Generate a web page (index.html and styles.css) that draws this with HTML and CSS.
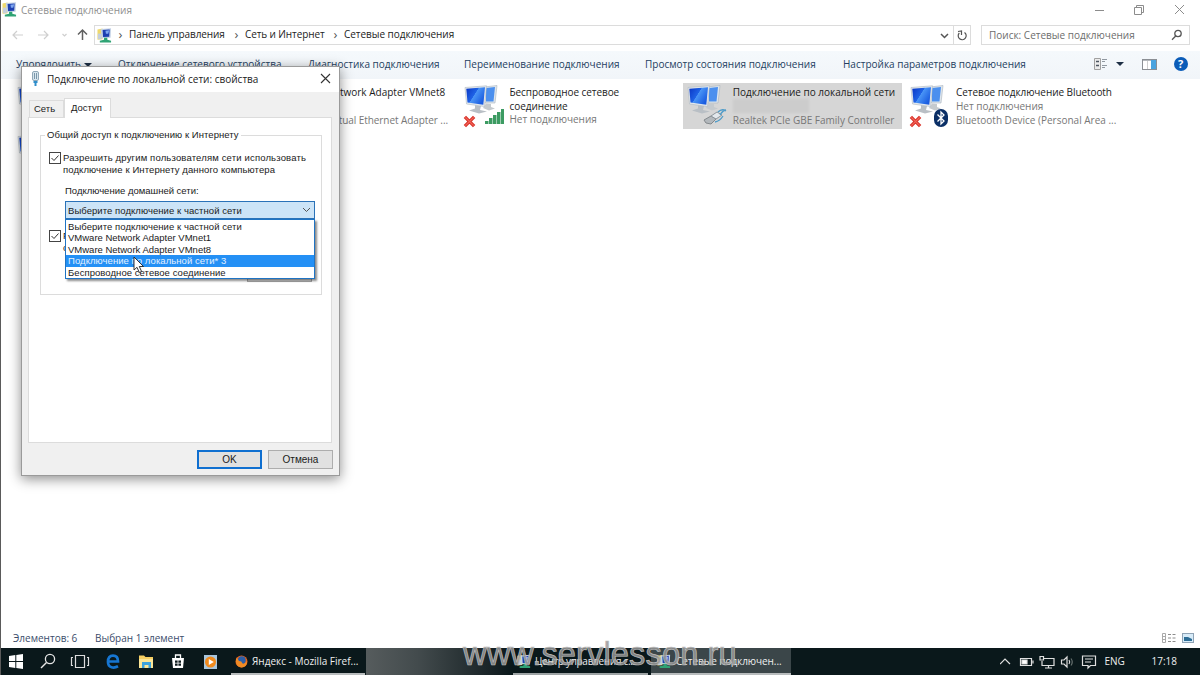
FILE: index.html
```
<!DOCTYPE html>
<html lang="ru">
<head>
    <meta charset="UTF-8">
    <title>Сетевые подключения</title>
    <link rel="stylesheet" href="styles.css">
</head>
<body>
    <!-- Shared icons -->
    <svg class="defs" width="0" height="0">
        <defs>
            <linearGradient id="screen" x1="0" y1="0" x2="1" y2="0.6">
                <stop offset="0" stop-color="#0a35c4"/>
                <stop offset="0.5" stop-color="#1f63e6"/>
                <stop offset="0.52" stop-color="#4a95f6"/>
                <stop offset="1" stop-color="#1a5ce0"/>
            </linearGradient>
            <symbol id="monitors" viewBox="0 0 34 30">
                <path d="M20 2 L33 0.5 L31 18 L21 18 Z" fill="#dfe6ec" stroke="#a9b4be" stroke-width="0.6"/>
                <path d="M22 3 L31 2 L29.5 16.5 L22 16.5 Z" fill="#4b8fee"/>
                <path d="M11 20 L17 21 L16 25 L23 26.500 L15 28.500 L5 25.500 L11 23.500 Z" fill="#b9bfc5"/>
                <path d="M22 18.500 L27 19 L27 22 L31 23.500 L25 25.500 L19 23 Z" fill="#c5cace"/>
                <path d="M1 2.5 L22.500 0.8 L20.500 21.5 L2.500 19 Z" fill="#e4e9ee" stroke="#aeb8c1" stroke-width="0.6"/>
                <path d="M2.300 3.800 L21 2.200 L19.3 19.8 L3.500 17.500 Z" fill="url(#screen)"/>
            </symbol>
            <symbol id="cross" viewBox="0 0 14 14">
                <path d="M2 2 L12 12 M12 2 L2 12" stroke="#d9342b" stroke-width="3.6"/>
                <path d="M2.5 2.5 L11.5 11.5 M11.5 2.5 L2.5 11.5" stroke="#f2655a" stroke-width="1.2"/>
            </symbol>
            <symbol id="network" viewBox="0 0 16 16">
                <path d="M0.500 1.500 L6 0.500 V12 L0.500 12.500 Z" fill="#efd96c"/>
                <path d="M1 6 H5 V12 H1 Z" fill="#c5cfdb"/>
                <path d="M4 1 L15 0.300 L14.500 10.500 L5 11 Z" fill="#c4d2e6"/>
                <path d="M6 2.200 L13.500 1.500 L13 9.400 L6.500 9.600 Z" fill="#1d3fb0"/>
                <path d="M9 3 L13 2.500 L12 6 L9.500 6 Z" fill="#7ea6f0"/>
                <path d="M7.500 10.500 H11 V12.500 L15 13.500 V15.500 H3 V13.500 L7.500 12.500 Z" fill="#2fa374"/>
            </symbol>
        </defs>
    </svg>

    <div class="screen">
        <!-- Title bar -->
        <header class="titlebar">
            <svg width="15" height="15"><use href="#network"/></svg>
            <span class="title">Сетевые подключения</span>
            <svg class="win-btns" width="100" height="14" fill="none" stroke="#8c8c8c">
                <path d="M3 7.5 H12"/>
                <path d="M42.5 4.5 H49.5 V11.5 H42.5 Z M44.5 4.5 V2.5 H51.5 V9.5 H49.5"/>
                <path d="M83 2 L92 11 M92 2 L83 11"/>
            </svg>
        </header>

        <!-- Navigation and address -->
        <nav class="navbar">
            <svg class="arrows" width="94" height="20" fill="none" stroke="#cfcfcf" stroke-width="1.2">
                <path d="M23 10 H13 M17 6 L13 10 L17 14"/>
                <path d="M38 10 H48 M44 6 L48 10 L44 14"/>
                <path d="M62.500 9 L64.500 11 L66.500 9"/>
                <path d="M82.500 15 V5 M78 9.500 L82.500 5 L87 9.500" stroke="#606060" stroke-width="1.5"/>
            </svg>
            <div class="address">
                <svg width="15" height="15"><use href="#network"/></svg>
                <span class="sep">›</span>
                <span class="crumb crumb-1">Панель управления</span>
                <span class="sep">›</span>
                <span class="crumb crumb-2">Сеть и Интернет</span>
                <span class="sep">›</span>
                <span class="crumb crumb-3">Сетевые подключения</span>
                <svg class="address-end" width="34" height="18" fill="none" stroke="#555">
                    <path d="M5 8 L8.500 11.500 L12 8" stroke-width="1.5"/>
                    <path d="M17.500 0 V18" stroke="#dcdcdc"/>
                    <path d="M23.300 7 A4 4 0 1 0 28.500 6.500 M22 5.500 L25.500 5 V9" stroke-width="1.2"/>
                </svg>
            </div>
            <div class="search">
                <span>Поиск: Сетевые подключения</span>
                <svg width="12" height="12" fill="none" stroke="#555" stroke-width="1.3">
                    <circle cx="7" cy="4.500" r="3.200"/>
                    <path d="M4.700 7 L1 10.700"/>
                </svg>
            </div>
        </nav>

        <!-- Command bar -->
        <div class="commands">
            <span class="cmd">Упорядочить <i class="caret"></i></span>
            <span class="cmd">Отключение сетевого устройства</span>
            <span class="cmd">Диагностика подключения</span>
            <span class="cmd">Переименование подключения</span>
            <span class="cmd">Просмотр состояния подключения</span>
            <span class="cmd">Настройка параметров подключения</span>
            <svg width="98" height="16" fill="none">
                <path d="M1.500 2.500 H7.500 V13.500 H1.500 Z" stroke="#a0a0a0" fill="#ececec"/>
                <path d="M3 5.500 H6 M3 9.500 H6" stroke="#4c5560" stroke-width="1.500"/>
                <path d="M9 3.500 H14 M9 5.500 H12 M9 9.500 H14 M9 11.500 H12" stroke="#9098a0"/>
                <path d="M23 6 H31 L27 10 Z" fill="#1e2f45"/>
                <rect x="49.500" y="3.500" width="14" height="10" fill="#fff" stroke="#8b8f94"/>
                <path d="M50 4.500 H63" stroke="#b4b8bc"/>
                <rect x="58" y="4" width="5" height="9" fill="#4aa3df"/>
                <path d="M54.500 5 V13" stroke="#cfcfcf"/>
                <circle cx="88" cy="8" r="7" fill="#0b5cb8"/>
                <text x="85" y="12" class="help">?</text>
            </svg>
        </div>

        <!-- Connections -->
        <main class="connections">
            <div class="conn">
                <div class="conn-icon"><svg width="34" height="30"><use href="#monitors"/></svg></div>
            </div>
            <div class="conn">
                <div class="conn-icon"><svg width="34" height="30"><use href="#monitors"/></svg></div>
                <div class="conn-text">
                    <b>VMware Network Adapter VMnet8</b>
                    <span>Включено</span>
                    <span class="tight">VMware Virtual Ethernet Adapter ...</span>
                </div>
            </div>
            <div class="conn">
                <div class="conn-icon">
                    <svg width="34" height="30"><use href="#monitors"/></svg>
                    <svg class="off" width="13" height="13"><use href="#cross"/></svg>
                    <svg class="badge" width="20" height="17" fill="#3c9b62">
                        <path d="M0 13 H3.500 V16 H0 Z M4 10 H7.500 V16 H4 Z M8 7 H11.500 V16 H8 Z M12 4 H15.500 V16 H12 Z M16 1 H19 V16 H16 Z"/>
                    </svg>
                </div>
                <div class="conn-text wifi">
                    <b class="tight">Беспроводное сетевое<br>соединение</b>
                    <span>Нет подключения</span>
                </div>
            </div>
            <div class="conn selected">
                <div class="conn-icon">
                    <svg width="34" height="30"><use href="#monitors"/></svg>
                    <svg class="badge plug" width="24" height="17" fill="none">
                        <path d="M1 12 L8 8 L13 11 L8 16 L3 15 Z" fill="#b3b8bc" stroke="#84898d"/>
                        <path d="M8 8 L14 4 L19 7 L13 11 Z" fill="#e3e8ec" stroke="#8f979d"/>
                        <path d="M15 4 Q19 0 23 3 M17 7 Q20 2 23 2 M12 14 Q17 13 20 8" stroke="#4f9cc9" stroke-width="1.300"/>
                    </svg>
                </div>
                <div class="conn-text">
                    <b>Подключение по локальной сети</b>
                    <span class="smudge"></span>
                    <span>Realtek PCIe GBE Family Controller</span>
                </div>
            </div>
            <div class="conn">
                <div class="conn-icon">
                    <svg width="34" height="30"><use href="#monitors"/></svg>
                    <svg class="off" width="13" height="13"><use href="#cross"/></svg>
                    <svg class="badge bt" width="14" height="18">
                        <rect width="14" height="18" rx="7" fill="#0b2f66"/>
                        <path d="M3.500 5.500 L10 12 L7 15 V3 L10 6 L3.500 12.500" fill="none" stroke="#fff" stroke-width="1.300"/>
                    </svg>
                </div>
                <div class="conn-text">
                    <b class="tight">Сетевое подключение Bluetooth</b>
                    <span>Нет подключения</span>
                    <span>Bluetooth Device (Personal Area ...</span>
                </div>
            </div>
            <div class="conn">
                <div class="conn-icon"><svg width="34" height="30"><use href="#monitors"/></svg></div>
            </div>
        </main>

        <!-- Status bar -->
        <div class="status">
            <span class="count">Элементов: 6</span>
            <span>Выбран 1 элемент</span>
            <svg width="34" height="12" fill="none">
                <path d="M1.500 1.500 H4.500 V10.500 H1.500 Z M1 4.500 H5 M1 7.500 H5" stroke="#a9a9a9"/>
                <path d="M7 2.500 H15 M7 6 H15 M7 9.500 H15" stroke="#8c8c8c" stroke-dasharray="3 1.500"/>
                <rect x="21.500" y="1.500" width="11" height="9" fill="#d7ebf8" stroke="#8fa3b5"/>
                <path d="M23 5 L27 5 L31 7 V9 H23 Z" fill="#2c6d96"/>
            </svg>
        </div>

        <!-- Taskbar -->
        <footer class="taskbar">
            <svg class="pinned" width="231" height="27" fill="none">
                <path d="M9 8 L15.300 7 V13 H9 Z M16.300 6.900 L23 6 V13 H16.300 Z M9 14 H15.300 V20 L9 19 Z M16.300 14 H23 V21 L16.300 20.100 Z" fill="#fff"/>
                <circle cx="50" cy="11" r="4.600" stroke="#e6e6e6" stroke-width="1.300"/>
                <path d="M46.500 14.500 L41 20" stroke="#e6e6e6" stroke-width="1.400"/>
                <path d="M75.500 7.500 H84.500 V19.500 H75.500 Z M73 9.500 H71.500 V17.500 H73 M87 9.500 H88.500 V17.500 H87" stroke="#dcdcdc" stroke-width="1.200"/>
                <path d="M108 13.500 H118 C118 9.500 116 7.700 113 7.700 C109.500 7.700 108 10 108 14 C108 20 114 20.500 118 18.300" stroke="#1676d2" stroke-width="2.700"/>
                <path d="M139 7.500 H144 L145.500 9 H153 V20 H139 Z" fill="#f5cf63"/>
                <path d="M139 11 H153 V20 H139 Z" fill="#fbe596"/>
                <path d="M142 20 V14 H151 V20 H148.500 V17 H144.500 V20 Z" fill="#3ba1dc"/>
                <path d="M172 10 H184 L183 20 H173 Z" fill="#fff"/>
                <path d="M175.500 10 V7 H180.500 V10" stroke="#fff" stroke-width="1.300"/>
                <path d="M175 12.500 H177.600 V14.700 H175 Z M178.400 12.500 H181 V14.700 H178.400 Z M175 15.500 H177.600 V17.700 H175 Z M178.400 15.500 H181 V17.700 H178.400 Z" fill="#0c1a1d"/>
                <rect x="204" y="7" width="13" height="14" fill="#a9c6dd"/>
                <circle cx="210.500" cy="14" r="5.500" fill="#f08a1d"/>
                <path d="M208.800 11 L213.800 14 L208.800 17 Z" fill="#fff"/>
            </svg>
            <div class="task">
                <svg width="13" height="13">
                    <circle cx="6.500" cy="6.500" r="6" fill="#e8641b"/>
                    <circle cx="6.800" cy="5.200" r="3.900" fill="#2c5fa8"/>
                    <path d="M1 3 Q3 4 4 6 Q7 6 7 8 Q9 10 12 6 Q12 12.500 6.500 12.500 Q0 12 1 3 Z" fill="#f08b25"/>
                </svg>
                <span>Яндекс - Mozilla Firef...</span>
            </div>
            <div class="task-blur"></div>
            <div class="task center">
                <svg width="14" height="15"><use href="#network"/></svg>
                <span class="center-name">Центр управления с...</span>
            </div>
            <div class="task active">
                <svg width="14" height="15"><use href="#network"/></svg>
                <span class="tight">Сетевые подключен...</span>
            </div>
            <div class="tray">
                <svg width="100" height="27" fill="none" stroke="#e0e0e0" stroke-width="1.200">
                    <path d="M0 16 L5 11 L10 16"/>
                    <path d="M20.500 10.500 H31.500 V17.500 H20.500 Z M33 12.500 V15.500"/>
                    <path d="M22 12 H27 V16 H22 Z" fill="#fff"/>
                    <path d="M43.500 10.500 H54 V17.500 H42 V13 M45 20 H52 M48.500 18 V20 M40 8.500 H43.500 V12 H40 Z"/>
                    <path d="M61.500 12 H64 L67 9 V19 L64 16 H61.500 Z"/>
                    <path d="M69 12 Q70.500 14 69 16"/>
                    <path d="M71 10.500 Q73.500 14 71 17.500" stroke="#66706f"/>
                    <path d="M82.500 8 H95.500 V17.500 H90.500 L88 20 V17.500 H82.500 Z M85 11 H93 M85 14 H91"/>
                </svg>
                <span class="lang">ENG</span>
                <span>17:18</span>
            </div>
        </footer>

        <!-- Properties dialog -->
        <section class="dialog">
            <div class="dialog-title">
                <svg width="10" height="16" fill="none">
                    <rect x="1.500" y="0.500" width="6" height="9" rx="1.500" fill="#d9e6ee" stroke="#8fa8b8"/>
                    <path d="M3.500 2 V8 M5.500 2 V8" stroke="#7a97aa"/>
                    <path d="M2.500 10 H6.500 V12 H5.500 V15 H3.500 V12 H2.500 Z" fill="#2f8ecb"/>
                </svg>
                <span class="dialog-name">Подключение по локальной сети: свойства</span>
                <svg class="close" width="11" height="11" stroke="#333" stroke-width="1.100">
                    <path d="M1 1 L10 10 M10 1 L1 10"/>
                </svg>
            </div>
            <div class="tabs">
                <span class="tab">Сеть</span>
                <span class="tab current">Доступ</span>
            </div>
            <div class="panel">
                <div class="group">
                    <span class="legend">Общий доступ к подключению к Интернету</span>
                    <div class="check">
                        <i class="box"><svg width="10" height="10" fill="none" stroke="#333"><path d="M1.500 5 L4 7.500 L8.500 2.500"/></svg></i>
                        <p><span class="wide">Разрешить другим пользователям сети использовать</span><br><span class="wider">подключение к Интернету данного компьютера</span></p>
                    </div>
                    <div class="label">Подключение домашней сети:</div>
                    <div class="combo">
                        <span class="loose">Выберите подключение к частной сети</span>
                        <svg width="9" height="6" fill="none" stroke="#555"><path d="M1 1 L4.500 4.500 L8 1"/></svg>
                        <ul class="list">
                            <li class="loose">Выберите подключение к частной сети</li>
                            <li>VMware Network Adapter VMnet1</li>
                            <li>VMware Network Adapter VMnet8</li>
                            <li class="loose hover">Подключение по локальной сети* 3</li>
                            <li class="loose">Беспроводное сетевое соединение</li>
                        </ul>
                        <svg class="cursor" width="12" height="18">
                            <path d="M1 1 V14 L4 11.300 L6.300 16.500 L8.600 15.500 L6.300 10.500 H10.500 Z" fill="#fff" stroke="#222" stroke-width="0.900"/>
                        </svg>
                    </div>
                    <div class="check second">
                        <i class="box"><svg width="10" height="10" fill="none" stroke="#333"><path d="M1.500 5 L4 7.500 L8.500 2.500"/></svg></i>
                        <p>Р<br>о</p>
                    </div>
                    <button class="btn setup"></button>
                </div>
            </div>
            <div class="buttons">
                <button class="btn ok">OK</button>
                <button class="btn">Отмена</button>
            </div>
        </section>

        <div class="watermark">www.servlesson.ru</div>
    </div>
</body>
</html>
```

FILE: styles.css
```
* {
    margin: 0;
    padding: 0;
    box-sizing: border-box;
}

body {
    width: 1200px;
    height: 675px;
    overflow: hidden;
    font-family: "Open Sans", "Noto Sans", sans-serif;
    font-size: 10px;
    color: #222;
    background: #fff;
}

.defs {
    position: absolute;
}

svg {
    display: block;
    flex: none;
}

span,
b,
p,
li {
    white-space: nowrap;
}

.screen {
    position: relative;
    display: flex;
    flex-direction: column;
    height: 675px;
    border-left: 1px solid #5a5a5a;
    overflow: hidden;
}

/* Title bar */
.titlebar {
    display: flex;
    align-items: center;
    height: 19px;
    padding: 0 8px 0 1px;
}

.title {
    margin-left: 4px;
    padding-top: 1px;
    color: #8f8f8f;
}

.win-btns {
    margin-left: auto;
}

/* Navigation */
.navbar {
    display: flex;
    height: 32px;
    padding-top: 6px;
}

.arrows {
    flex: none;
    margin-left: -1px;
}

.address {
    display: flex;
    align-items: center;
    width: 877px;
    height: 20px;
    padding-left: 2px;
    border: 1px solid #dcdcdc;
}

.sep {
    width: 17px;
    text-align: center;
    font-size: 13px;
    line-height: 14px;
    color: #555;
    padding-bottom: 3px;
}

.crumb {
    padding-bottom: 2px;
}

.crumb-1 {
    width: 99px;
    letter-spacing: -0.08px;
}

.crumb-2 {
    width: 82px;
    letter-spacing: -0.1px;
}

.crumb-3 {
    letter-spacing: -0.04px;
}

.address-end {
    margin-left: auto;
}

.search {
    display: flex;
    align-items: center;
    justify-content: space-between;
    width: 209px;
    height: 20px;
    margin-left: 10px;
    padding: 0 6px 0 7px;
    border: 1px solid #dcdcdc;
    color: #6d6d6d;
}

/* Command bar */
.commands {
    display: grid;
    grid-template-columns: 102px 190px 156px 181px 198px 250px 98px;
    align-items: center;
    height: 28px;
    padding-left: 15px;
    background: linear-gradient(#f5f9fc, #f1f5f9);
    color: #24405f;
}

.cmd {
    padding-bottom: 3px;
}

.commands svg {
    margin-bottom: 2px;
}

.caret {
    display: inline-block;
    margin-left: 1px;
    border: 4px solid transparent;
    border-top: 4px solid #1e2f45;
    border-bottom: 0;
    vertical-align: 1px;
}

.help {
    font: bold 11px "Open Sans", sans-serif;
    fill: #fff;
}

/* Connections list */
.connections {
    flex: 1;
    display: grid;
    grid-template-columns: repeat(5, 219px);
    grid-auto-rows: 46px;
    align-content: start;
    gap: 3px 4.250px;
    padding: 4px 0 0 12px;
}

.conn {
    display: flex;
    height: 46px;
}

.selected {
    background: #d6d6d6;
}

.conn-icon {
    position: relative;
    width: 50px;
    padding: 2px 0 0 4px;
    flex: none;
}

.off {
    position: absolute;
    left: 3px;
    bottom: 1px;
}

.badge {
    position: absolute;
    right: 5px;
    bottom: 4px;
}

.plug {
    right: 6px;
}

.bt {
    right: 8px;
    bottom: 2px;
}

.conn-text {
    padding-top: 2px;
    line-height: 14px;
    color: #777;
}

.conn-text b {
    display: block;
    font-weight: normal;
    color: #1c1c1c;
}

.conn-text span {
    display: block;
}

.tight,
.conn-text .tight {
    letter-spacing: -0.07px;
}

.wifi {
    padding-top: 3px;
    line-height: 13.500px;
}

.smudge {
    width: 76px;
    height: 14px;
    background: #cccccc;
    filter: blur(1px);
}

/* Status bar */
.status {
    display: flex;
    align-items: center;
    height: 20px;
    padding: 0 5px 0 12px;
    color: #3b4c6b;
}

.count {
    width: 82px;
}

.status svg {
    margin-left: auto;
}

/* Taskbar */
.taskbar {
    display: flex;
    height: 27px;
    background: #0a181b;
    color: #eee;
}

.pinned {
    margin-left: -1px;
}

.task {
    display: flex;
    align-items: center;
    gap: 4px;
    width: 134px;
    padding: 0 0 0 4px;
    border-bottom: 2px solid #b8bcbd;
    overflow: hidden;
}

.task svg {
    margin-top: 2px;
}

.task-blur {
    width: 146px;
    margin: 0 1px;
    background: linear-gradient(90deg, #565c5d, #434b4d 35%, #152023 90%, #0a181b);
}

.center {
    gap: 4px;
    width: 135px;
    border-bottom-color: #9ea4a5;
}

.center-name {
    letter-spacing: -0.3px;
}

.active {
    gap: 5px;
    width: 140px;
    margin-left: 3px;
    padding-left: 6px;
    background: #3b4649;
}

.tray {
    display: flex;
    align-items: center;
    margin-left: auto;
    padding-right: 23px;
}

.tray span {
    padding-bottom: 1px;
}

.lang {
    width: 47px;
    margin-left: 5px;
}

/* Properties dialog */
.dialog {
    position: absolute;
    left: 20px;
    top: 66px;
    width: 319px;
    height: 410px;
    background: #f0f0f0;
    border: 1px solid #9a9a9a;
    box-shadow: 0 3px 12px rgba(0, 0, 0, 0.45);
    font-family: "Liberation Sans", Arial, sans-serif;
    font-size: 9.500px;
    color: #1a1a1a;
}

.dialog-title {
    display: flex;
    align-items: center;
    height: 25px;
    padding: 0 8px 2px 9px;
    background: #fff;
    font-family: "Open Sans", "Noto Sans", sans-serif;
    font-size: 10px;
}

.dialog-name {
    margin-left: 6px;
}

.close {
    margin-left: auto;
}

.tabs {
    display: flex;
    align-items: flex-end;
    height: 25px;
    padding-left: 7px;
}

.tab {
    width: 35px;
    height: 17px;
    padding-left: 4px;
    border: 1px solid #dcdcdc;
    border-bottom: 0;
    line-height: 16px;
}

.current {
    width: 47px;
    height: 20px;
    margin-bottom: -1px;
    padding-left: 6px;
    line-height: 17px;
    background: #fff;
}

.panel {
    height: 326px;
    margin: 0 7px 0 6px;
    padding: 17px 9px 0 11px;
    background: #fff;
    border: 1px solid #dcdcdc;
}

.group {
    height: 160px;
    padding: 0 7px 0 8px;
    border: 1px solid #dcdcdc;
}

.legend {
    display: block;
    width: max-content;
    height: 12px;
    margin: -7px 0 0 -4px;
    padding: 0 2px;
    line-height: 12px;
    letter-spacing: 0.06px;
    background: #fff;
}

.check {
    display: flex;
    gap: 2px;
    margin-top: 11px;
    line-height: 11.500px;
}

.wide {
    letter-spacing: 0.160px;
}

.wider {
    letter-spacing: 0.1px;
}

.loose {
    letter-spacing: 0.06px;
}

.box {
    width: 12px;
    height: 12px;
    border: 1px solid #444;
    background: #fff;
    flex: none;
}

.label {
    margin: 10px 0 0 16px;
    line-height: 12px;
}

.combo {
    position: relative;
    display: flex;
    align-items: center;
    justify-content: space-between;
    width: 250px;
    height: 18px;
    margin: 4px 0 0 16px;
    padding: 0 3px 0 2px;
    background: #cce4f7;
    border: 1px solid #2a72b8;
}

.list {
    position: absolute;
    left: -1px;
    top: 17px;
    width: 250px;
    height: 60px;
    padding-top: 1px;
    background: #fff;
    border: 1px solid #1f74c4;
    box-shadow: 2px 2px 2px rgba(0, 0, 0, 0.45);
    list-style: none;
    z-index: 2;
}

.list li {
    height: 11.400px;
    padding-left: 2px;
    line-height: 11.400px;
}

.list .hover {
    background: #2490f5;
    color: #e4f1ff;
}

.cursor {
    position: absolute;
    left: 67px;
    top: 54px;
    z-index: 3;
}

.second {
    margin-top: 11px;
}

.btn {
    width: 65px;
    height: 19px;
    background: #e1e1e1;
    border: 1px solid #adadad;
    font: 10px "Liberation Sans", Arial, sans-serif;
    color: #1a1a1a;
}

.setup {
    display: block;
    margin: 10px 2px 0 auto;
}

.buttons {
    display: flex;
    justify-content: flex-end;
    gap: 6px;
    padding: 7px 6px 0 0;
}

.ok {
    border: 2px solid #0f6fd0;
}

/* Site name over the taskbar */
.watermark {
    position: absolute;
    left: 462px;
    top: 636px;
    font-family: "Liberation Sans", Arial, sans-serif;
    font-size: 32.700px;
    line-height: 36px;
    letter-spacing: 0.08px;
    color: rgba(150, 150, 150, 0.85);
    -webkit-text-stroke: 0.700px #bdbdbd;
}
```
